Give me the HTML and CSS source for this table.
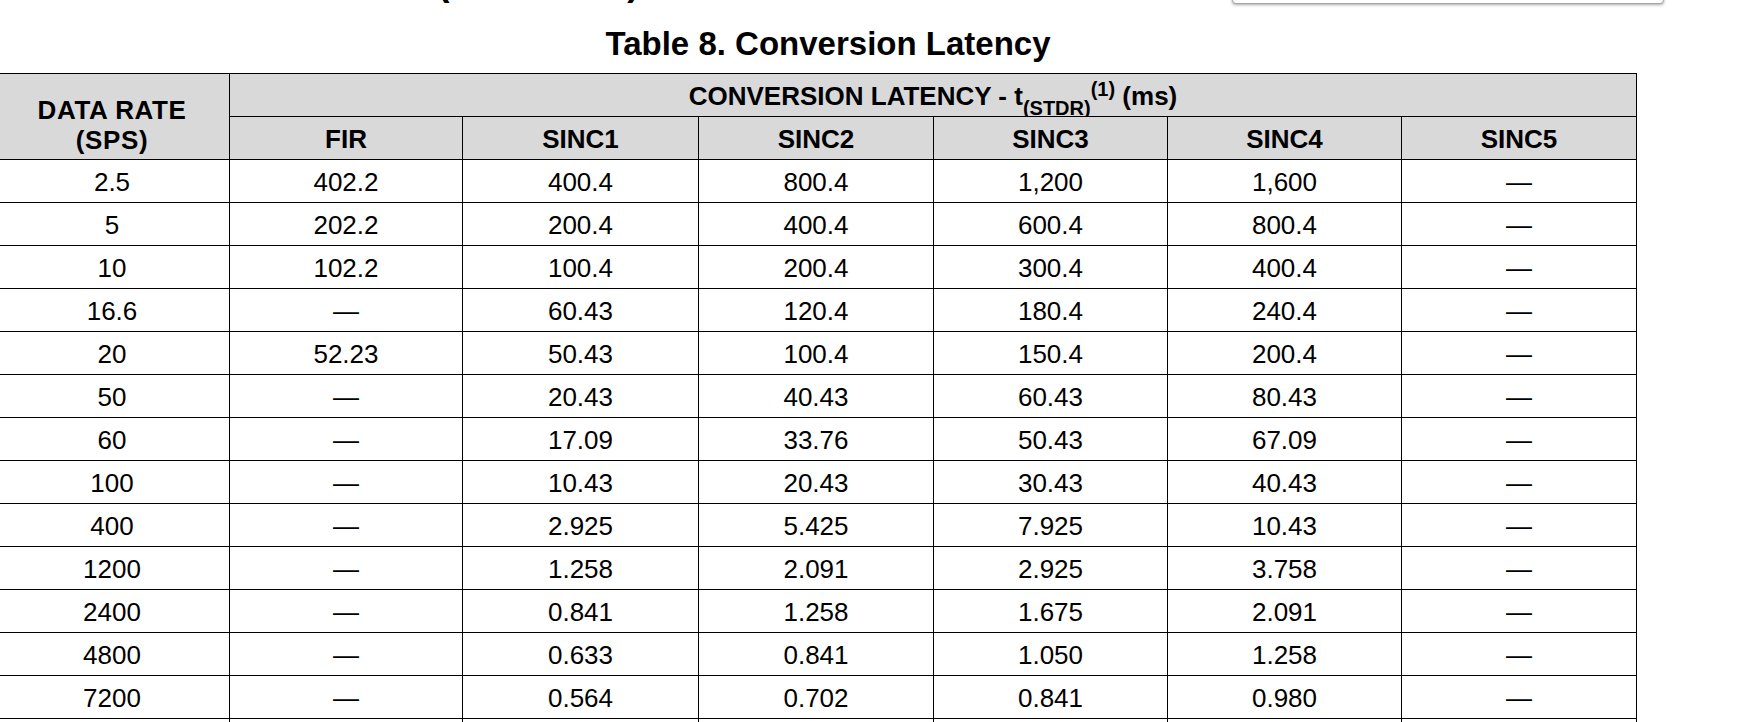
FILE: index.html
```html
<!DOCTYPE html>
<html lang="en">
<head>
<meta charset="utf-8">
<title>Table 8. Conversion Latency</title>
<link rel="stylesheet" href="styles.css">
</head>
<body>
<div class="page">
  <div class="find-box"></div>
  <h2 class="prev-heading">Conversion Time (Continued)</h2>
  <div class="doc">
    <h3 class="title">Table 8. Conversion Latency</h3>
    <div class="grid" role="table">
      <div class="cell head rate">
        <span>DATA RATE</span>
        <span>(SPS)</span>
      </div>
      <div class="cell head latency">CONVERSION LATENCY - t<sub>(STDR)</sub><sup>(1)</sup>&nbsp;(ms)</div>
      <div class="cell head">FIR</div>
      <div class="cell head">SINC1</div>
      <div class="cell head">SINC2</div>
      <div class="cell head">SINC3</div>
      <div class="cell head">SINC4</div>
      <div class="cell head">SINC5</div>

      <div class="cell">2.5</div><div class="cell">402.2</div><div class="cell">400.4</div><div class="cell">800.4</div><div class="cell">1,200</div><div class="cell">1,600</div><div class="cell">—</div>
      <div class="cell">5</div><div class="cell">202.2</div><div class="cell">200.4</div><div class="cell">400.4</div><div class="cell">600.4</div><div class="cell">800.4</div><div class="cell">—</div>
      <div class="cell">10</div><div class="cell">102.2</div><div class="cell">100.4</div><div class="cell">200.4</div><div class="cell">300.4</div><div class="cell">400.4</div><div class="cell">—</div>
      <div class="cell">16.6</div><div class="cell">—</div><div class="cell">60.43</div><div class="cell">120.4</div><div class="cell">180.4</div><div class="cell">240.4</div><div class="cell">—</div>
      <div class="cell">20</div><div class="cell">52.23</div><div class="cell">50.43</div><div class="cell">100.4</div><div class="cell">150.4</div><div class="cell">200.4</div><div class="cell">—</div>
      <div class="cell">50</div><div class="cell">—</div><div class="cell">20.43</div><div class="cell">40.43</div><div class="cell">60.43</div><div class="cell">80.43</div><div class="cell">—</div>
      <div class="cell">60</div><div class="cell">—</div><div class="cell">17.09</div><div class="cell">33.76</div><div class="cell">50.43</div><div class="cell">67.09</div><div class="cell">—</div>
      <div class="cell">100</div><div class="cell">—</div><div class="cell">10.43</div><div class="cell">20.43</div><div class="cell">30.43</div><div class="cell">40.43</div><div class="cell">—</div>
      <div class="cell">400</div><div class="cell">—</div><div class="cell">2.925</div><div class="cell">5.425</div><div class="cell">7.925</div><div class="cell">10.43</div><div class="cell">—</div>
      <div class="cell">1200</div><div class="cell">—</div><div class="cell">1.258</div><div class="cell">2.091</div><div class="cell">2.925</div><div class="cell">3.758</div><div class="cell">—</div>
      <div class="cell">2400</div><div class="cell">—</div><div class="cell">0.841</div><div class="cell">1.258</div><div class="cell">1.675</div><div class="cell">2.091</div><div class="cell">—</div>
      <div class="cell">4800</div><div class="cell">—</div><div class="cell">0.633</div><div class="cell">0.841</div><div class="cell">1.050</div><div class="cell">1.258</div><div class="cell">—</div>
      <div class="cell">7200</div><div class="cell">—</div><div class="cell">0.564</div><div class="cell">0.702</div><div class="cell">0.841</div><div class="cell">0.980</div><div class="cell">—</div>
      <div class="cell"></div><div class="cell"></div><div class="cell"></div><div class="cell"></div><div class="cell"></div><div class="cell"></div><div class="cell"></div>
    </div>
  </div>
</div>
</body>
</html>
```

FILE: styles.css
```css
html, body {
  margin: 0;
  padding: 0;
  background: #ffffff;
}

body {
  font-family: "Liberation Sans", Arial, sans-serif;
  color: #000000;
}

.page {
  position: relative;
  width: 1741px;
  height: 722px;
  overflow: hidden;
  background: #ffffff;
}

.find-box {
  position: absolute;
  left: 1232px;
  top: -40px;
  width: 430px;
  height: 42px;
  border: 1px solid #a6a6a6;
  border-radius: 0 0 4px 4px;
  background: #ffffff;
  box-shadow: 0 1px 3px rgba(0, 0, 0, 0.35);
}

.prev-heading {
  margin: -37px 0 0;
  height: 40px;
  padding-left: 136px;
  font-size: 36px;
  line-height: 40px;
  font-weight: bold;
  white-space: nowrap;
}

.doc {
  margin-left: -6px;
  width: 1643px;
}

.title {
  margin: 23px 0 11px;
  padding-left: 25px;
  height: 36px;
  font-size: 33px;
  line-height: 36px;
  font-weight: bold;
  text-align: center;
  white-space: nowrap;
}

.grid {
  display: grid;
  grid-template-columns: 234px 232px 235px 234px 233px 233px 234px;
  grid-auto-rows: 42px;
  gap: 1px;
  width: max-content;
  background: #000000;
  border: 1px solid #000000;
}

.cell {
  background: #ffffff;
  text-align: center;
  font-size: 26px;
  line-height: 40px;
  padding-top: 2px;
  white-space: nowrap;
}

.head {
  background: #d9d9d9;
  font-weight: bold;
}

.rate {
  grid-row: span 2;
  display: flex;
  flex-direction: column;
  justify-content: flex-end;
  align-items: center;
  padding: 0 0 4px;
  line-height: 30px;
  letter-spacing: 0.6px;
}

.latency {
  grid-column: span 6;
}

.latency sub,
.latency sup {
  font-size: 20px;
  line-height: 0;
}

.latency sub {
  vertical-align: -10px;
}

.latency sup {
  vertical-align: 9px;
}
```
